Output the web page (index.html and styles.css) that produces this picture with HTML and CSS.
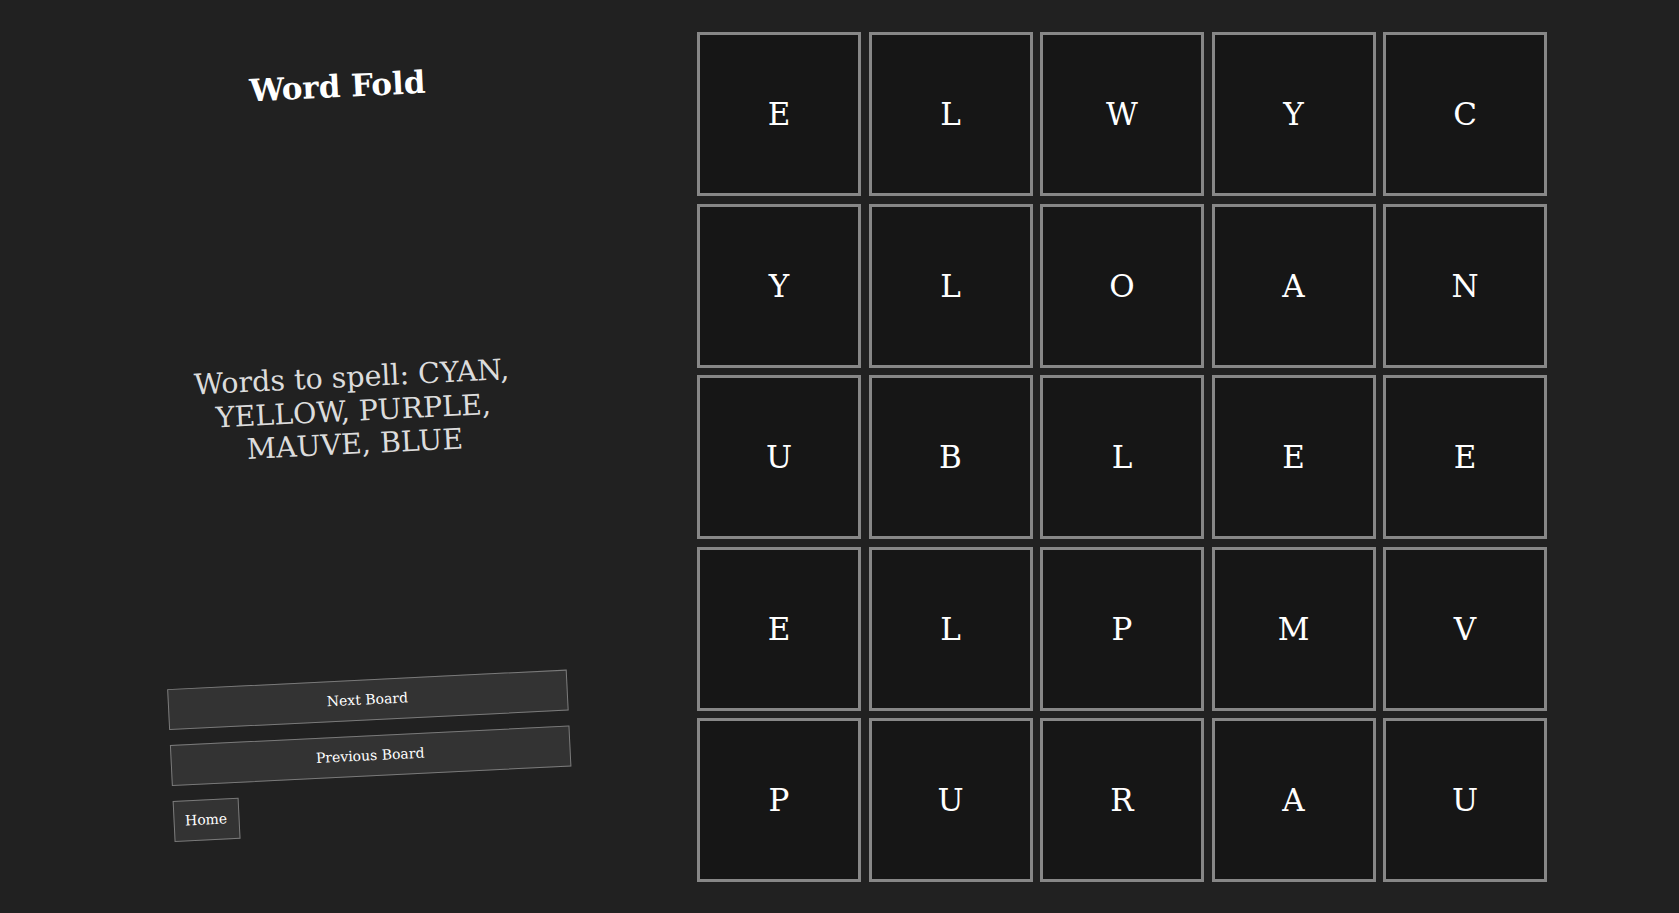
FILE: index.html
```html
<!DOCTYPE html>
<html lang="en">
<head>
<meta charset="utf-8">
<title>Word Fold</title>
<link rel="stylesheet" href="styles.css">
</head>
<body>
<div class="page">
  <aside class="panel">
    <h1 class="title">Word Fold</h1>
    <p class="words">Words to spell: CYAN, YELLOW, PURPLE, MAUVE, BLUE</p>
    <div class="controls">
      <button class="btn btn-wide">Next Board</button>
      <button class="btn btn-wide">Previous Board</button>
      <button class="btn btn-home">Home</button>
    </div>
  </aside>
  <main class="board">
    <div class="cell">E</div><div class="cell">L</div><div class="cell">W</div><div class="cell">Y</div><div class="cell">C</div>
    <div class="cell">Y</div><div class="cell">L</div><div class="cell">O</div><div class="cell">A</div><div class="cell">N</div>
    <div class="cell">U</div><div class="cell">B</div><div class="cell">L</div><div class="cell">E</div><div class="cell">E</div>
    <div class="cell">E</div><div class="cell">L</div><div class="cell">P</div><div class="cell">M</div><div class="cell">V</div>
    <div class="cell">P</div><div class="cell">U</div><div class="cell">R</div><div class="cell">A</div><div class="cell">U</div>
  </main>
</div>
</body>
</html>
```
FILE: styles.css
```css
html, body {
  margin: 0;
  padding: 0;
  background: #212121;
  color: #ffffff;
  font-family: "DejaVu Serif", "Liberation Serif", serif;
  overflow: hidden;
}

.page {
  display: flex;
  width: 1679px;
  height: 913px;
}

.panel {
  flex: 0 0 697px;
  height: 913px;
  box-sizing: border-box;
  padding-left: 14px;
  display: flex;
  flex-direction: column;
  align-items: center;
  transform: rotate(-2.8deg);
}

.title {
  margin: 68px 0 0;
  font-size: 31px;
  line-height: 37px;
  font-weight: bold;
  color: #ffffff;
}

.words {
  margin: 256px 0 0;
  width: 370px;
  font-size: 28.5px;
  line-height: 33.5px;
  text-align: center;
  color: #dcdcdc;
}

.controls {
  margin-top: 218px;
  width: 400px;
  display: flex;
  flex-direction: column;
  align-items: flex-start;
  gap: 15px;
}

.btn {
  height: 41px;
  box-sizing: border-box;
  background: #333333;
  color: #ffffff;
  border: 1px solid #7a7a7a;
  font-family: "DejaVu Serif", "Liberation Serif", serif;
  font-size: 14px;
  padding: 0 10px;
}

.btn-wide {
  width: 400px;
}

.btn-home {
  width: 66px;
  margin-top: 0;
}

.board {
  margin-top: 32px;
  display: grid;
  grid-template-columns: repeat(5, 164px);
  grid-auto-rows: 164px;
  gap: 7.5px;
  align-content: start;
}

.cell {
  box-sizing: border-box;
  background: #161616;
  border: 3px solid #878787;
  display: flex;
  align-items: center;
  justify-content: center;
  font-size: 31px;
  color: #ffffff;
}
```
